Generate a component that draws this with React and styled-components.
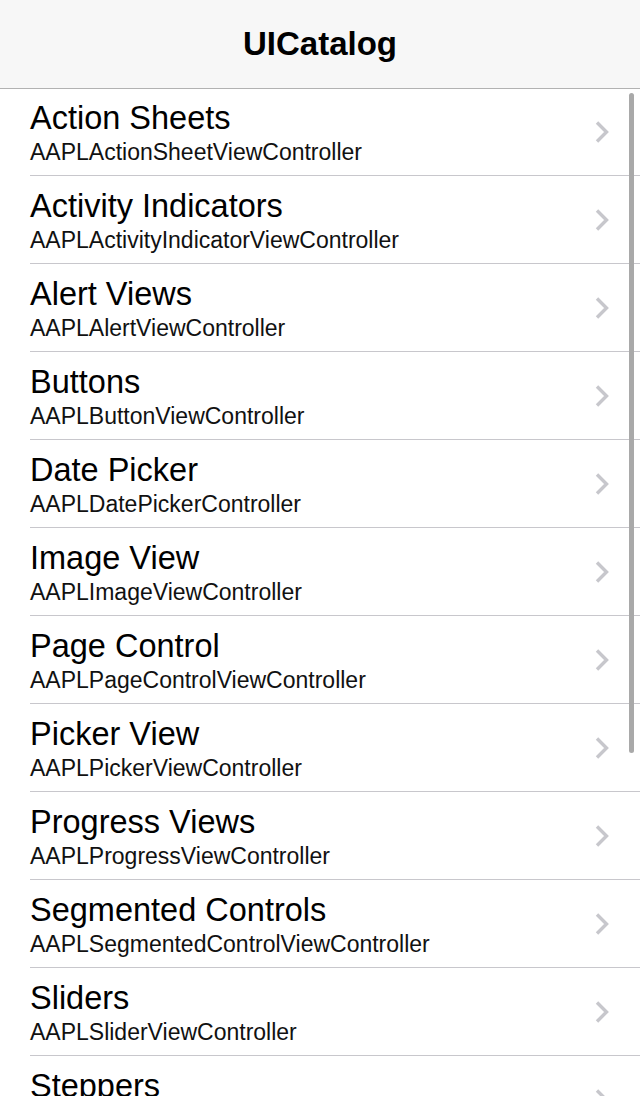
import React from "react";
import styled, { createGlobalStyle } from "styled-components";

const Global = createGlobalStyle`
  html, body { margin: 0; padding: 0; background: #fff; overflow: hidden; }
  body { font-family: "Liberation Sans", Arial, sans-serif; -webkit-font-smoothing: antialiased; }
`;

const Screen = styled.div`
  position: relative;
  width: 640px;
  height: 1096px;
  overflow: hidden;
  background: #fff;
`;

const NavBar = styled.header`
  height: 89px;
  box-sizing: border-box;
  background: #f7f7f7;
  border-bottom: 1px solid #b2b2b2;
  display: flex;
  align-items: center;
  justify-content: center;
`;

const NavTitle = styled.h1`
  margin: 0;
  font-size: 33px;
  font-weight: 700;
  color: #000;
  letter-spacing: 0;
`;

const List = styled.ul`
  list-style: none;
  margin: 0;
  padding: 0 0 0 30px;
`;

const Row = styled.li`
  height: 88px;
  box-sizing: border-box;
  border-bottom: 1px solid #c8c7cc;
  display: flex;
  align-items: center;
  padding-right: 30px;
  ${(p) => (p.$first ? "height: 87px;" : "")}
`;

const Texts = styled.div`
  flex: 1;
  display: flex;
  flex-direction: column;
  gap: 3px;
  padding-top: 1px;
`;

const Title = styled.div`
  font-size: 32.5px;
  line-height: 36px;
  color: #000;
`;

const Subtitle = styled.div`
  font-size: 23px;
  line-height: 26px;
  color: #111;
`;

const Chevron = styled.svg`
  width: 16px;
  height: 24px;
  flex: none;
`;

const ScrollIndicator = styled.div`
  position: absolute;
  left: 629px;
  top: 93px;
  width: 5px;
  height: 660px;
  border-radius: 3px;
  background: #a9a9a9;
`;

const items = [
  ["Action Sheets", "AAPLActionSheetViewController"],
  ["Activity Indicators", "AAPLActivityIndicatorViewController"],
  ["Alert Views", "AAPLAlertViewController"],
  ["Buttons", "AAPLButtonViewController"],
  ["Date Picker", "AAPLDatePickerController"],
  ["Image View", "AAPLImageViewController"],
  ["Page Control", "AAPLPageControlViewController"],
  ["Picker View", "AAPLPickerViewController"],
  ["Progress Views", "AAPLProgressViewController"],
  ["Segmented Controls", "AAPLSegmentedControlViewController"],
  ["Sliders", "AAPLSliderViewController"],
  ["Steppers", "AAPLStepperViewController"],
];

const ChevronIcon = () => (
  <Chevron viewBox="0 0 16 24">
    <path
      d="M3 2.5 L12.5 12 L3 21.5"
      fill="none"
      stroke="#c7c7cc"
      strokeWidth="3.4"
      strokeLinecap="butt"
      strokeLinejoin="miter"
    />
  </Chevron>
);

export default function App() {
  return (
    <Screen>
      <Global />
      <NavBar>
        <NavTitle>UICatalog</NavTitle>
      </NavBar>
      <List>
        {items.map(([t, s], i) => (
          <Row key={t} $first={i === 0}>
            <Texts>
              <Title>{t}</Title>
              <Subtitle>{s}</Subtitle>
            </Texts>
            <ChevronIcon />
          </Row>
        ))}
      </List>
      <ScrollIndicator />
    </Screen>
  );
}
